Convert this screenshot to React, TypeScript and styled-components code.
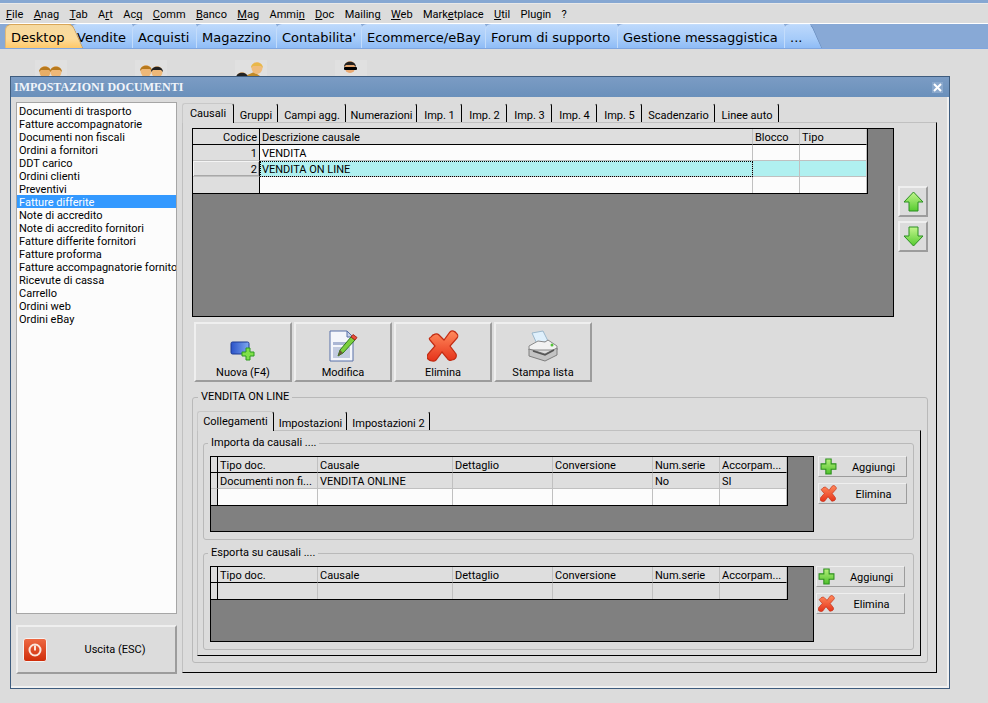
import React from 'react';
import styled, { createGlobalStyle } from 'styled-components';

const GlobalStyle = createGlobalStyle`
  html, body {
    margin: 0;
    padding: 0;
    background: #dcdcdc;
    font-family: Roboto, "Noto Sans", sans-serif;
    font-size: 11px;
    color: #000;
  }
`;

const Page = styled.div`
  position: relative;
  width: 988px;
  height: 703px;
  overflow: hidden;
  background: #dcdcdc;
`;

const TopBand = styled.div`
  height: 3px;
  background: #86a7d2;
  border-bottom: 1px solid #e8e8e8;
`;

const MenuBar = styled.div`
  display: flex;
  align-items: flex-start;
  height: 19px;
  padding-left: 6px;
  gap: 10.4px;
  background: #dcdcdc;
  border-bottom: 1px solid #fff;
  line-height: 22px;
  u { text-underline-offset: 1px; }
`;

const TabStrip = styled.div`
  display: flex;
  height: 24px;
  padding: 0 0 0 5px;
  background: #88a9d6;
  border-bottom: 1px solid #7fa6e0;
  box-sizing: content-box;
`;

const TopTab = styled.div<{ $active?: boolean; $w: number }>`
  position: relative;
  box-sizing: border-box;
  width: ${p => p.$w}px;
  height: 24px;
  padding: 3px 0 0 5px;
  font-family: "DejaVu Sans", sans-serif;
  font-size: 13px;
  line-height: 20px;
  white-space: nowrap;
  border-radius: 6px 0 0 0;
  border-top: 1px solid ${p => (p.$active ? '#d9a657' : '#c3dcfb')};
  border-left: 1px solid ${p => (p.$active ? '#e0b878' : '#c3dcfb')};
  background: ${p =>
    p.$active
      ? 'linear-gradient(#f5d9a0, #fddb9a 60%, #ffc868)'
      : 'linear-gradient(#bcd8fb, #a6cbf9 60%, #8fbcf6)'};
  z-index: ${p => (p.$active ? 2 : 1)};
  &::after {
    content: '';
    position: absolute;
    top: -1px;
    right: -7px;
    bottom: 0;
    width: 14px;
    border-top-right-radius: 5px;
    border-top: 1px solid ${p => (p.$active ? '#d9a657' : '#c3dcfb')};
    border-right: 1px solid ${p => (p.$active ? '#d09a48' : '#6f93c4')};
    background: inherit;
    transform: skewX(24deg);
    z-index: -1;
  }
`;

const Desktop = styled.div`
  display: flex;
  gap: 68px;
  padding: 11px 0 0 35px;
`;

const DesktopIcon = styled.div`
  width: 32px;
  height: 32px;
  background: #e0e0e0;
`;

const Win = styled.div`
  position: absolute;
  left: 10px;
  top: 76px;
  box-sizing: border-box;
  width: 940px;
  height: 613px;
  background: #dcdcdc;
  border: 1px solid #3e5c7e;
  box-shadow: inset -2px -2px 0 #f1f1f1;
`;

const TitleBar = styled.div`
  display: flex;
  align-items: center;
  justify-content: space-between;
  height: 20px;
  padding: 0 6px 0 3px;
  background: linear-gradient(#7b9cc4, #6a90bb);
  color: #f0f4fa;
  font-family: "Liberation Serif", serif;
  font-size: 12px;
  font-weight: bold;
`;

const CloseBox = styled.span`
  display: flex;
  align-items: center;
  justify-content: center;
  width: 11px;
  height: 11px;
  background: #8aa8cc;
`;

const WinBody = styled.div`
  display: flex;
  gap: 5px;
  padding: 5px 0 0 5px;
`;

const LeftCol = styled.div`
  display: flex;
  flex-direction: column;
  width: 161px;
  gap: 11px;
`;

const DocList = styled.div`
  box-sizing: border-box;
  height: 512px;
  padding: 1px 0;
  background: #fcfcfc;
  border: 1px solid #a6a6a6;
  overflow: hidden;
`;

const DocItem = styled.div<{ $selected?: boolean }>`
  height: 13px;
  padding-left: 2px;
  line-height: 15px;
  white-space: nowrap;
  overflow: hidden;
  background: ${p => (p.$selected ? '#3399ff' : 'transparent')};
  color: ${p => (p.$selected ? '#fff' : '#000')};
`;

const Bevel = styled.div`
  box-sizing: border-box;
  background: #dcdcdc;
  border: 2px solid;
  border-color: #efefef #9c9c9c #9c9c9c #efefef;
`;

const ExitButton = styled(Bevel)`
  display: flex;
  align-items: center;
  height: 49px;
  padding-left: 5px;
  svg { flex: none; }
  span { flex: 1; text-align: center; padding-left: 8px; }
`;

const RightCol = styled.div`
  display: flex;
  flex-direction: column;
  width: 755px;
`;

const TabRow = styled.div<{ $top: number }>`
  display: flex;
  height: 19px;
  margin-top: ${p => p.$top}px;
`;

const PageTab = styled.div<{ $active?: boolean; $w: number }>`
  box-sizing: border-box;
  width: ${p => p.$w}px;
  height: ${p => (p.$active ? 20 : 19)}px;
  padding-top: ${p => (p.$active ? 2 : 4)}px;
  text-align: center;
  line-height: 15px;
  white-space: nowrap;
  border-right: 1px solid #000;
  border-left: 1px solid ${p => (p.$active ? '#c8c8c8' : '#dcdcdc')};
  border-top: 1px solid ${p => (p.$active ? '#c8c8c8' : '#dcdcdc')};
  border-radius: 3px 3px 0 0;
  background: #dcdcdc;
  position: relative;
  z-index: ${p => (p.$active ? 1 : 0)};
`;

const TabPanel = styled.div<{ $h: number }>`
  box-sizing: border-box;
  height: ${p => p.$h}px;
  border: 1px solid;
  border-color: #c0c0c0 #000 #000 #c0c0c0;
`;

const MainPanel = styled(TabPanel)`
  padding: 5px 0 0 9px;
`;

const GridRow = styled.div`
  display: flex;
  gap: 4px;
`;

const GridBack = styled.div<{ $w: number; $h: number }>`
  box-sizing: border-box;
  flex: none;
  width: ${p => p.$w}px;
  height: ${p => p.$h}px;
  background: #808080;
  border: 1px solid #000;
`;

const GridTable = styled.div<{ $cols: string }>`
  display: grid;
  grid-template-columns: ${p => p.$cols};
  grid-auto-rows: 16px;
  width: fit-content;
  border-right: 1px solid #000;
  border-bottom: 1px solid #000;
  box-sizing: content-box;
`;

const Cell = styled.div<{
  $tone: 'head' | 'gray' | 'white' | 'cyan';
  $right?: boolean;
  $strong?: boolean;
  $noLine?: boolean;
  $raised?: boolean;
  $focus?: boolean;
  $headLine?: boolean;
}>`
  box-sizing: border-box;
  padding: 0 2px;
  line-height: 17px;
  white-space: nowrap;
  overflow: hidden;
  text-align: ${p => (p.$right ? 'right' : 'left')};
  background: ${p =>
    p.$tone === 'cyan' ? '#b0f0f0' : p.$tone === 'white' ? '#fcfcfc' : '#dedede'};
  border-right: 1px solid ${p => (p.$strong ? '#000' : '#c0c0c0')};
  border-bottom: ${p =>
    p.$noLine ? '0' : `1px solid ${p.$headLine ? '#000' : '#c0c0c0'}`};
  ${p => (p.$raised ? 'box-shadow: inset 1px 1px 0 #f4f4f4, inset -1px -1px 0 #a8a8a8;' : '')}
  ${p => (p.$focus ? 'outline: 1px dotted #000; outline-offset: -1px;' : '')}
`;

const ArrowCol = styled.div`
  display: flex;
  flex-direction: column;
  gap: 4px;
  padding-top: 58px;
`;

const ArrowButton = styled(Bevel)`
  display: flex;
  align-items: center;
  justify-content: center;
  width: 30px;
  height: 31px;
`;

const ActionRow = styled.div`
  display: flex;
  gap: 2px;
  margin: 5px 0 0 2px;
`;

const ActionButton = styled(Bevel)`
  display: flex;
  flex-direction: column;
  align-items: center;
  justify-content: flex-end;
  width: 98px;
  height: 60px;
  padding-bottom: 1px;
  svg { margin-bottom: 4px; }
`;

const GroupBox = styled.div<{ $w: number; $h: number; $top: number; $left?: number }>`
  position: relative;
  box-sizing: border-box;
  width: ${p => p.$w}px;
  height: ${p => p.$h}px;
  margin-top: ${p => p.$top}px;
  margin-left: ${p => p.$left ?? 0}px;
  border: 1px solid #b9b9b9;
  border-radius: 3px;
`;

const Legend = styled.span<{ $x: number }>`
  position: absolute;
  left: ${p => p.$x}px;
  top: -8px;
  padding: 0 3px;
  line-height: 14px;
  background: #dcdcdc;
  white-space: nowrap;
`;

const DetailGroup = styled(GroupBox)`
  padding: 13px 0 0 4px;
`;

const LinkPanel = styled(TabPanel)<{ $w: number }>`
  width: ${p => p.$w}px;
  padding: 12px 0 0 5px;
`;

const InnerGroup = styled(GroupBox)`
  display: flex;
  padding: 12px 0 0 6px;
`;

const SideButtons = styled.div<{ $gap: number }>`
  display: flex;
  flex-direction: column;
  gap: 6px;
  margin-left: ${p => p.$gap}px;
`;

const SmallButton = styled(Bevel)`
  display: flex;
  align-items: center;
  width: 89px;
  height: 21px;
  padding-left: 1px;
  border-width: 1px;
  svg { flex: none; }
  span { flex: 1; text-align: center; padding: 2px 0 0 4px; }
`;

const menuItems: [string, string, string][] = [
  ['', 'F', 'ile'], ['', 'A', 'nag'], ['', 'T', 'ab'], ['A', 'r', 't'], ['Ac', 'q', ''],
  ['', 'C', 'omm'], ['', 'B', 'anco'], ['', 'M', 'ag'], ['Ammi', 'n', ''], ['', 'D', 'oc'],
  ['Mailin', 'g', ''], ['', 'W', 'eb'], ['Mark', 'e', 'tplace'], ['', 'U', 'til'],
  ['Plugin', '', ''], ['?', '', ''],
];

const topTabs: [string, number][] = [
  ['Desktop', 66], ['Vendite', 61], ['Acquisti', 64], ['Magazzino', 80], ['Contabilita\'', 85],
  ['Ecommerce/eBay', 124], ['Forum di supporto', 132], ['Gestione messaggistica', 167], ['...', 26],
];

const pageTabs: [string, number][] = [
  ['Causali', 52], ['Gruppi', 44], ['Campi agg.', 68], ['Numerazioni', 71], ['Imp. 1', 45], ['Imp. 2', 45],
  ['Imp. 3', 45], ['Imp. 4', 45], ['Imp. 5', 45], ['Scadenzario', 73], ['Linee auto', 64],
];

const linkTabs: [string, number][] = [['Collegamenti', 77], ['Impostazioni', 73], ['Impostazioni 2', 83]];

const documents = [
  'Documenti di trasporto', 'Fatture accompagnatorie', 'Documenti non fiscali', 'Ordini a fornitori',
  'DDT carico', 'Ordini clienti', 'Preventivi', 'Fatture differite', 'Note di accredito',
  'Note di accredito fornitori', 'Fatture differite fornitori', 'Fatture proforma',
  'Fatture accompagnatorie fornitori', 'Ricevute di cassa', 'Carrello', 'Ordini web', 'Ordini eBay',
];

const linkCols = '7px 100px 135px 100px 100px 67px 67px';
const linkHeader = ['', 'Tipo doc.', 'Causale', 'Dettaglio', 'Conversione', 'Num.serie', 'Accorpam...'];

const PlusIcon = ({ size = 16 }: { size?: number }) => (
  <svg width={size} height={size} viewBox="0 0 16 16">
    <defs>
      <linearGradient id="plusFill" x1="0" y1="0" x2="0" y2="1">
        <stop offset="0" stopColor="#b5f07a" />
        <stop offset="1" stopColor="#4fc02c" />
      </linearGradient>
    </defs>
    <path d="M5.500 1h5v4.500H15v5h-4.500V15h-5v-4.500H1v-5h4.500z" fill="url(#plusFill)" stroke="#2c8f1e" />
  </svg>
);

const CrossIcon = ({ size = 16 }: { size?: number }) => (
  <svg width={size} height={size} viewBox="0 0 32 32">
    <defs>
      <linearGradient id="crossFill" x1="0" y1="0" x2="0" y2="1">
        <stop offset="0" stopColor="#ff8a5c" />
        <stop offset="1" stopColor="#e5331a" />
      </linearGradient>
    </defs>
    <path
      d="M4 7c2-3 6-4 8-2l5 5 6-8c2-2 5-1 7 2 1 1 1 3 0 4l-7 8 6 8c1 3-1 6-4 6-2 1-4 0-5-2l-5-6-6 8c-2 2-6 1-8-1-1-1-1-3 0-5l7-8-5-6c-1-1-1-2 1-3z"
      fill="url(#crossFill)"
      stroke="#c22b12"
      strokeWidth="1.2"
    />
  </svg>
);

const ArrowIcon = ({ down }: { down?: boolean }) => (
  <svg width="21" height="21" viewBox="0 0 21 21">
    <defs>
      <linearGradient id="arrowFill" x1="0" y1="0" x2="0" y2="1">
        <stop offset="0" stopColor="#c4f58e" />
        <stop offset="1" stopColor="#55cb2f" />
      </linearGradient>
    </defs>
    <path
      d={down ? 'M6 1h9v9h5L10.500 20 1 10h5z' : 'M10.500 1 20 11h-5v9H6v-9H1z'}
      fill="url(#arrowFill)"
      stroke="#2b8f22"
    />
  </svg>
);

const NewIcon = () => (
  <svg width="26" height="22" viewBox="0 0 26 22">
    <defs>
      <linearGradient id="newFill" x1="0" y1="0" x2="1" y2="0">
        <stop offset="0" stopColor="#2a52c8" />
        <stop offset="1" stopColor="#7fa8f0" />
      </linearGradient>
    </defs>
    <rect x="1" y="2" width="18" height="12" rx="1.500" fill="url(#newFill)" stroke="#1c3a94" />
    <path d="M16 8h4v4h4v4h-4v4h-4v-4h-4v-4h4z" fill="#7fe04a" stroke="#2c9a1e" />
  </svg>
);

const EditIcon = () => (
  <svg width="30" height="32" viewBox="0 0 30 32">
    <path d="M2 1h17l6 6v24H2z" fill="#f4f6fb" stroke="#5870a8" />
    <path d="M19 1v6h6z" fill="#c8d2ea" stroke="#5870a8" />
    <rect x="5" y="12" width="17" height="3" fill="#aab6d4" />
    <rect x="5" y="17" width="17" height="11" fill="#c2cbe0" />
    <path d="M10 26l2-6L23 7l4 3-12 13z" fill="#7ccf3e" stroke="#2f7a1c" />
    <path d="M23 7l2-2.500 4 3-2 2.500z" fill="#e8503a" stroke="#a82a1a" />
    <path d="M10 26l2-6 3 3z" fill="#6a5a3a" />
  </svg>
);

const PrinterIcon = () => (
  <svg width="32" height="32" viewBox="0 0 32 32">
    <path d="M5 3l11-2 5 10-11 3z" fill="#dff0fc" stroke="#9cb8cc" />
    <path d="M2 16l9-5 7 1 3-2 9 6v4H2z" fill="#f2f2f2" stroke="#8a8a8a" />
    <path d="M2 19l16 5 12-6v7l-12 6-16-5z" fill="#c4c4c4" stroke="#7e7e7e" />
    <path d="M6 21l12 4 9-5" fill="none" stroke="#555" strokeWidth="1.500" />
    <circle cx="25" cy="15" r="1.500" fill="#56c23a" />
  </svg>
);

const PowerIcon = () => (
  <svg width="24" height="24" viewBox="0 0 24 24">
    <defs>
      <linearGradient id="powerFill" x1="0" y1="0" x2="0" y2="1">
        <stop offset="0" stopColor="#ee6a44" />
        <stop offset="1" stopColor="#cf2c08" />
      </linearGradient>
    </defs>
    <rect x="0.500" y="0.500" width="23" height="23" rx="2.500" fill="url(#powerFill)" stroke="#f4f4f4" />
    <circle cx="12" cy="12" r="5.500" fill="none" stroke="#fbe6dc" strokeWidth="2" />
    <path d="M12 7.500v5" stroke="#fbe6dc" strokeWidth="2" />
  </svg>
);

const CloseIcon = () => (
  <svg width="9" height="9" viewBox="0 0 9 9">
    <path d="M1 1l7 7M8 1L1 8" stroke="#fff" strokeWidth="2" />
  </svg>
);

const Head = ({ x, hair, skin, y = 5 }: { x: number; hair: string; skin: string; y?: number }) => (
  <g>
    <ellipse cx={x} cy={y + 5} rx="5.500" ry="6" fill={skin} />
    <path d={`M${x - 6} ${y + 5}c0-7 12-7 12 0l-2-2h-8z`} fill={hair} />
  </g>
);

const FIRST = (
  <svg width="32" height="32" viewBox="0 0 32 32">
    <Head x={10} y={7} hair="#b87a1e" skin="#e8ae66" />
    <Head x={21} y={7} hair="#b87a1e" skin="#eeb878" />
  </svg>
);

const SECOND = (
  <svg width="32" height="32" viewBox="0 0 32 32">
    <Head x={11} y={6} hair="#b87a1e" skin="#eeb878" />
    <Head x={22} y={7} hair="#222" skin="#eeb878" />
  </svg>
);

const THIRD = (
  <svg width="32" height="32" viewBox="0 0 32 32">
    <path d="M10 16l9-4 6 4z" fill="#c08a28" />
    <Head x={22} y={3} hair="#e8b84a" skin="#f0bc7c" />
    <Head x={7} y={13} hair="#222" skin="#eeb878" />
  </svg>
);

const FOURTH = (
  <svg width="32" height="32" viewBox="0 0 32 32">
    <path d="M6 16h20v4H6z" fill="#6870b8" />
    <Head x={15} y={2} hair="#222" skin="#e8a870" />
    <rect x="9" y="7" width="13" height="3" rx="1" fill="#000" />
  </svg>
);

type GridProps = {
  cols: string;
  header: { label: string; right?: boolean; strong?: boolean }[];
  rows: { cells: string[]; tone: 'gray' | 'white' | 'cyan'; firstTone?: 'gray'; raised?: boolean; focusCol?: number }[];
  strongCol: number;
};

const DataGrid = ({ cols, header, rows, strongCol }: GridProps) => (
  <GridTable $cols={cols}>
    {header.map((h, i) => (
      <Cell key={i} $tone="head" $right={h.right} $strong={i === strongCol} $headLine>{h.label}</Cell>
    ))}
    {rows.map((row, r) =>
      row.cells.map((text, c) => (
        <Cell
          key={`${r}-${c}`}
          $tone={c === 0 && row.firstTone ? row.firstTone : row.tone}
          $right={header[c].right}
          $strong={c === strongCol}
          $noLine={r === rows.length - 1}
          $raised={c === 0 && row.raised}
          $focus={row.focusCol === c}
        >
          {text}
        </Cell>
      ))
    )}
  </GridTable>
);

const linkHead = linkHeader.map(label => ({ label }));

const LinkGroup = ({ title, legendX, rows, gap, top, h }: {
  title: string;
  legendX: number;
  rows: GridProps['rows'];
  gap: number;
  top: number;
  h: number;
}) => (
  <InnerGroup $w={711} $h={97} $top={top}>
    <Legend $x={legendX}>{title}</Legend>
    <GridBack $w={604} $h={h}>
      <DataGrid cols={linkCols} header={linkHead} rows={rows} strongCol={0} />
    </GridBack>
    <SideButtons $gap={gap}>
      <SmallButton><PlusIcon size={17} /><span>Aggiungi</span></SmallButton>
      <SmallButton><CrossIcon size={17} /><span>Elimina</span></SmallButton>
    </SideButtons>
  </InnerGroup>
);

export default function App() {
  return (
    <Page>
      <GlobalStyle />
      <TopBand />
      <MenuBar>
        {menuItems.map(([a, b, c]) => (
          <span key={a + b + c}>{a}{b && <u>{b}</u>}{c}</span>
        ))}
      </MenuBar>
      <TabStrip>
        {topTabs.map(([label, w], i) => (
          <TopTab key={label} $w={w} $active={i === 0}>{label}</TopTab>
        ))}
      </TabStrip>
      <Desktop>
        <DesktopIcon>{FIRST}</DesktopIcon>
        <DesktopIcon>{SECOND}</DesktopIcon>
        <DesktopIcon>{THIRD}</DesktopIcon>
        <DesktopIcon>{FOURTH}</DesktopIcon>
      </Desktop>

      <Win>
        <TitleBar>
          IMPOSTAZIONI DOCUMENTI
          <CloseBox><CloseIcon /></CloseBox>
        </TitleBar>
        <WinBody>
          <LeftCol>
            <DocList>
              {documents.map((d, i) => (
                <DocItem key={d} $selected={i === 7}>{d}</DocItem>
              ))}
            </DocList>
            <ExitButton>
              <PowerIcon />
              <span>Uscita (ESC)</span>
            </ExitButton>
          </LeftCol>

          <RightCol>
            <TabRow $top={1}>
              {pageTabs.map(([label, w], i) => (
                <PageTab key={label} $w={w} $active={i === 0}>{label}</PageTab>
              ))}
            </TabRow>
            <MainPanel $h={551}>
              <GridRow>
                <GridBack $w={702} $h={189}>
                  <DataGrid
                    cols="67px 493px 47px 67px"
                    strongCol={0}
                    header={[
                      { label: 'Codice', right: true },
                      { label: 'Descrizione causale' },
                      { label: 'Blocco' },
                      { label: 'Tipo' },
                    ]}
                    rows={[
                      { cells: ['1', 'VENDITA', '', ''], tone: 'white', firstTone: 'gray' },
                      { cells: ['2', 'VENDITA ON LINE', '', ''], tone: 'cyan', firstTone: 'gray', raised: true, focusCol: 1 },
                      { cells: ['', '', '', ''], tone: 'white', firstTone: 'gray' },
                    ]}
                  />
                </GridBack>
                <ArrowCol>
                  <ArrowButton><ArrowIcon /></ArrowButton>
                  <ArrowButton><ArrowIcon down /></ArrowButton>
                </ArrowCol>
              </GridRow>

              <ActionRow>
                <ActionButton><NewIcon /><span>Nuova (F4)</span></ActionButton>
                <ActionButton><EditIcon /><span>Modifica</span></ActionButton>
                <ActionButton><CrossIcon size={32} /><span>Elimina</span></ActionButton>
                <ActionButton><PrinterIcon /><span>Stampa lista</span></ActionButton>
              </ActionRow>

              <DetailGroup $w={736} $h={266} $top={15}>
                <Legend $x={5}>VENDITA ON LINE</Legend>
                <TabRow $top={0}>
                  {linkTabs.map(([label, w], i) => (
                    <PageTab key={label} $w={w} $active={i === 0}>{label}</PageTab>
                  ))}
                </TabRow>
                <LinkPanel $h={226} $w={724}>
                  <LinkGroup
                    title="Importa da causali ...."
                    legendX={4}
                    top={0}
                    gap={4}
                    h={76}
                    rows={[
                      { cells: ['', 'Documenti non fi...', 'VENDITA ONLINE', '', '', 'No', 'SI'], tone: 'gray' },
                      { cells: ['', '', '', '', '', '', ''], tone: 'white', firstTone: 'gray' },
                    ]}
                  />
                  <LinkGroup
                    title="Esporta su causali ...."
                    legendX={4}
                    top={13}
                    gap={2}
                    h={76}
                    rows={[
                      { cells: ['', '', '', '', '', '', ''], tone: 'gray' },
                    ]}
                  />
                </LinkPanel>
              </DetailGroup>
            </MainPanel>
          </RightCol>
        </WinBody>
      </Win>
    </Page>
  );
}
